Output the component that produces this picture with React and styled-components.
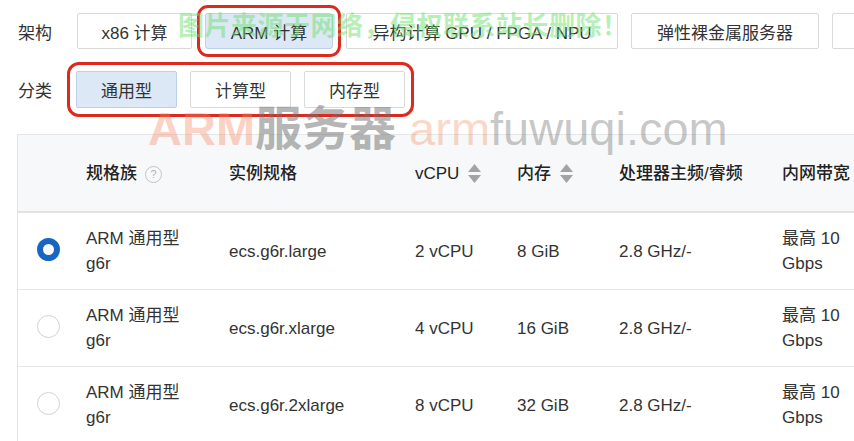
import React from "react";
import styled, { createGlobalStyle } from "styled-components";

const Global = createGlobalStyle`
  html, body { margin: 0; padding: 0; overflow: hidden; background: #fff; }
  body { font-family: "Liberation Sans", "Noto Sans CJK SC", sans-serif; color: #333; }
`;

const Page = styled.div`
  position: relative;
  width: 854px;
  height: 441px;
  overflow: hidden;
  padding: 13px 0 0 18px;
  box-sizing: border-box;
`;

const FilterRow = styled.div`
  display: flex;
  align-items: center;
  margin-top: ${(p) => p.$mt || 0}px;
`;

const Label = styled.div`
  width: ${(p) => p.$w}px;
  flex: none;
  font-size: 17px;
  color: #333;
`;

const Buttons = styled.div`
  display: flex;
  gap: ${(p) => p.$gap}px;
  flex: none;
  ${(p) =>
    p.$marked &&
    `outline: 3px solid #dc2a1f; outline-offset: 6px; border-radius: 3px;`}
`;

const Btn = styled.div`
  flex: none;
  box-sizing: border-box;
  width: ${(p) => p.$w}px;
  height: ${(p) => p.$h}px;
  display: flex;
  align-items: center;
  justify-content: center;
  white-space: nowrap;
  font-size: 17px;
  color: #333;
  border: 1px solid ${(p) => (p.$active ? "#bdd0e8" : "#d9d9d9")};
  background: ${(p) => (p.$active ? "#dce8f6" : "#fff")};
  border-radius: 2px;
  ${(p) =>
    p.$marked &&
    `outline: 3px solid #dc2a1f; outline-offset: 5px; border-radius: 3px;`}
`;

const Table = styled.div`
  margin-top: 26px;
  margin-left: -1px;
  width: 900px;
  border-left: 1px solid #e3e3e3;
  border-top: 1px solid #e6e6e6;
`;

const Row = styled.div`
  display: grid;
  grid-template-columns: 68px 143px 186px 102px 102px 163px 110px;
  align-items: center;
  height: 76px;
  background: ${(p) => (p.$head ? "#f7f8f9" : "#fff")};
  border-bottom: ${(p) => (p.$head ? "2px solid #e2e2e2" : "1px solid #e8e8e8")};
  font-size: 17px;
  line-height: 25px;
  color: #333;
`;

const Cell = styled.div`
  padding-right: ${(p) => p.$pr || 12}px;
  padding-left: ${(p) => p.$pl || 0}px;
  padding-bottom: ${(p) => p.$pb || 0}px;
  display: flex;
  align-items: center;
  gap: 8px;
  font-weight: ${(p) => (p.$head ? 500 : 400)};
  color: ${(p) => (p.$head ? "#222" : "#333")};
`;

const Radio = styled.span`
  display: block;
  box-sizing: border-box;
  width: 23px;
  height: 23px;
  border-radius: 50%;
  border: ${(p) => (p.$on ? "6px solid #1767c2" : "1px solid #d2d2d2")};
  background: #fff;
`;

const Help = styled.span`
  display: inline-flex;
  align-items: center;
  justify-content: center;
  width: 15px;
  height: 15px;
  border: 1px solid #c4c4c4;
  border-radius: 50%;
  font-size: 11px;
  line-height: 1;
  color: #b5b5b5;
  margin-top: 3px;
`;

const Sort = () => (
  <svg width="15" height="21" viewBox="0 0 15 21">
    <path d="M7.5 1 L14 9 H1 Z" fill="#a3a3a3" />
    <path d="M7.5 20 L14 12 H1 Z" fill="#a3a3a3" />
  </svg>
);

const GreenMark = styled.div`
  position: absolute;
  left: 178px;
  top: 5px;
  font-size: 26px;
  font-weight: 700;
  letter-spacing: 0.5px;
  color: rgba(110, 225, 110, 0.5);
  white-space: nowrap;
  pointer-events: none;
`;

const SiteMark = styled.div`
  position: absolute;
  left: 148px;
  top: 101px;
  display: flex;
  align-items: baseline;
  white-space: nowrap;
  pointer-events: none;
  font-size: 47px;
  line-height: 56px;
`;

const MarkPart = styled.span`
  color: ${(p) => p.$c};
  font-weight: ${(p) => (p.$bold ? 700 : 400)};
`;

const rows = [
  { spec: "ecs.g6r.large", cpu: "2 vCPU", mem: "8 GiB", on: true },
  { spec: "ecs.g6r.xlarge", cpu: "4 vCPU", mem: "16 GiB" },
  { spec: "ecs.g6r.2xlarge", cpu: "8 vCPU", mem: "32 GiB" },
];

export default function App() {
  return (
    <Page>
      <Global />
      <FilterRow>
        <Label $w={59}>架构</Label>
        <Buttons $gap={13}>
          <Btn $w={115} $h={36}>x86 计算</Btn>
          <Btn $w={128} $h={36} $active $marked>ARM 计算</Btn>
          <Btn $w={272} $h={36}>异构计算 GPU / FPGA / NPU</Btn>
          <Btn $w={188} $h={36}>弹性裸金属服务器</Btn>
          <Btn $w={120} $h={36}>&nbsp;</Btn>
        </Buttons>
      </FilterRow>
      <FilterRow $mt={22}>
        <Label $w={58}>分类</Label>
        <Buttons $gap={13} $marked>
          <Btn $w={101} $h={37} $active>通用型</Btn>
          <Btn $w={101} $h={37}>计算型</Btn>
          <Btn $w={101} $h={37}>内存型</Btn>
        </Buttons>
      </FilterRow>
      <Table>
        <Row $head>
          <Cell />
          <Cell $head>规格族<Help>?</Help></Cell>
          <Cell $head>实例规格</Cell>
          <Cell $head>vCPU<Sort /></Cell>
          <Cell $head>内存<Sort /></Cell>
          <Cell $head>处理器主频/睿频</Cell>
          <Cell $head>内网带宽</Cell>
        </Row>
        {rows.map((r) => (
          <Row key={r.spec}>
            <Cell $pl={19} $pb={4}><Radio $on={r.on} /></Cell>
            <Cell $pr={22}>ARM 通用型 g6r</Cell>
            <Cell>{r.spec}</Cell>
            <Cell>{r.cpu}</Cell>
            <Cell>{r.mem}</Cell>
            <Cell>2.8 GHz/-</Cell>
            <Cell $pr={40}>最高 10 Gbps</Cell>
          </Row>
        ))}
      </Table>
      <GreenMark>图片来源于网络，侵权联系站长删除！</GreenMark>
      <SiteMark>
        <MarkPart $c="rgba(245,135,100,0.38)" $bold>ARM</MarkPart>
        <MarkPart $c="rgba(110,110,110,0.5)" $bold>服务器</MarkPart>
        <MarkPart $c="rgba(245,140,95,0.35)">&nbsp;arm</MarkPart>
        <MarkPart $c="rgba(120,120,120,0.42)">fuwuqi.com</MarkPart>
      </SiteMark>
    </Page>
  );
}
